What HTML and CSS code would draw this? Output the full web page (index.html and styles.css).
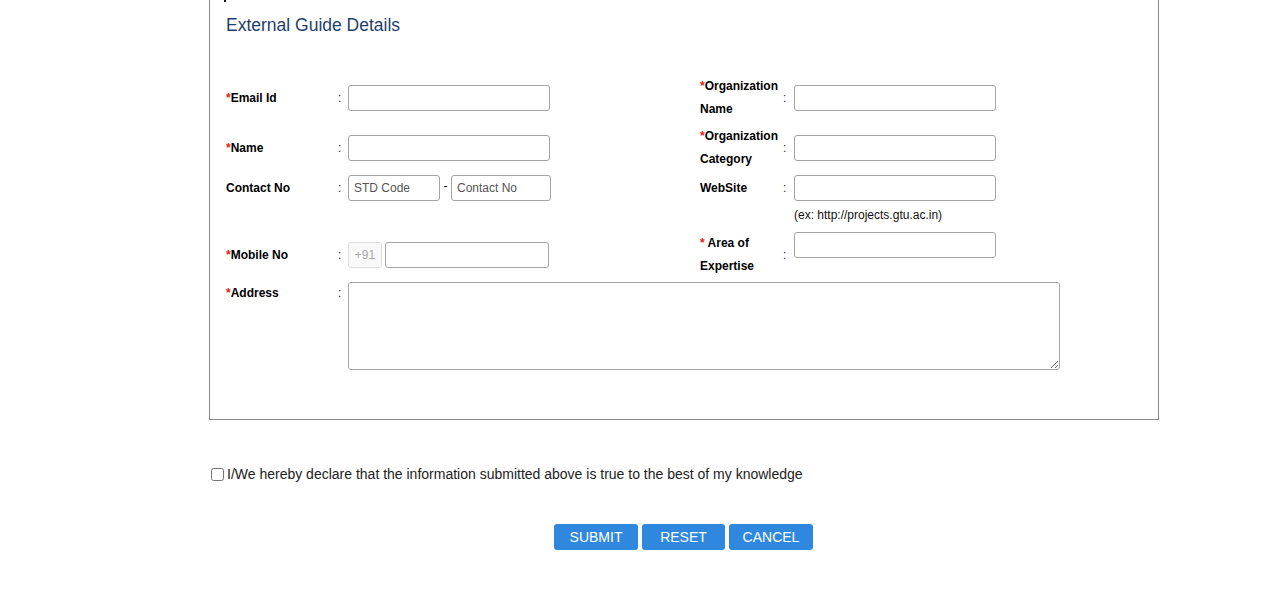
FILE: index.html
```html
<!DOCTYPE html>
<html>
<head>
<meta charset="utf-8">
<link rel="stylesheet" href="styles.css">
</head>
<body>
<div class="page">
  <div class="panel">
    <div class="mark"></div>
    <h2 class="title">External Guide Details</h2>
    <div class="grid">
      <!-- row 1 -->
      <div class="lbl"><span class="req">*</span>Email Id</div>
      <div class="colon">:</div>
      <div class="cell"><input class="inp w202" type="text"></div>
      <div class="lbl two"><span class="req">*</span>Organization Name</div>
      <div class="colon">:</div>
      <div class="cell"><input class="inp w202" type="text"></div>
      <!-- row 2 -->
      <div class="lbl"><span class="req">*</span>Name</div>
      <div class="colon">:</div>
      <div class="cell"><input class="inp w202" type="text"></div>
      <div class="lbl two"><span class="req">*</span>Organization Category</div>
      <div class="colon">:</div>
      <div class="cell"><input class="inp w202" type="text"></div>
      <!-- row 3 -->
      <div class="lbl">Contact No</div>
      <div class="colon">:</div>
      <div class="cell pair"><input class="inp w92" type="text" placeholder="STD Code"><span class="dash">-</span><input class="inp w100" type="text" placeholder="Contact No"></div>
      <div class="lbl">WebSite</div>
      <div class="colon">:</div>
      <div class="cell"><input class="inp w202" type="text"></div>
      <!-- hint row -->
      <div class="hint">(ex: http://projects.gtu.ac.in)</div>
      <!-- row 4 -->
      <div class="lbl"><span class="req">*</span>Mobile No</div>
      <div class="colon">:</div>
      <div class="cell pair"><span class="prefix">+91</span><input class="inp w164" type="text"></div>
      <div class="lbl two"><span class="req">*</span> Area of Expertise</div>
      <div class="colon">:</div>
      <div class="cell top"><input class="inp w202" type="text"></div>
      <!-- row 5 -->
      <div class="lbl top addr"><span class="req">*</span>Address</div>
      <div class="colon top addr">:</div>
      <div class="cell wide"><textarea class="area"></textarea></div>
    </div>
  </div>
  <label class="declare"><input type="checkbox" class="chk">I/We hereby declare that the information submitted above is true to the best of my knowledge</label>
  <div class="actions">
    <button class="btn b84" type="button">SUBMIT</button>
    <button class="btn b83" type="button">RESET</button>
    <button class="btn b84" type="button">CANCEL</button>
  </div>
</div>
</body>
</html>
```
FILE: styles.css
```css
html, body {
  margin: 0;
  padding: 0;
  background: #ffffff;
}
body {
  font-family: "Liberation Sans", Arial, sans-serif;
  color: #000;
}
.page {
  margin-left: 209px;
  width: 950px;
}
.panel {
  border: 1px solid #8a8a8a;
  border-top: none;
  padding: 0 0 49px 16px;
}
.mark {
  width: 2px;
  height: 2px;
  margin-left: -2px;
  background: #111;
}
.title {
  margin: 12px 0 38px 0;
  font-size: 17.5px;
  line-height: 22px;
  font-weight: normal;
  color: #1e3f6c;
}
.grid {
  display: grid;
  grid-template-columns: 112px 10px 352px 83px 11px 1fr;
  grid-template-rows: 48px 52px 28px 26px 54px 88px;
  align-items: center;
}
.lbl {
  font-size: 12px;
  font-weight: bold;
  line-height: 20px;
}
.lbl.two {
  line-height: 23px;
}
.req {
  color: #e21b1b;
}
.colon {
  font-size: 12px;
  line-height: 20px;
  color: #222;
}
.top {
  align-self: start;
}
.addr {
  margin-top: 1px;
}
.cell.top {
  margin-top: 4px;
}
.cell {
  display: flex;
  align-items: center;
}
.inp {
  box-sizing: border-box;
  height: 26px;
  border: 1px solid #a6a6a6;
  border-radius: 3px;
  padding: 0 5px;
  font-family: "Liberation Sans", Arial, sans-serif;
  font-size: 12px;
  color: #333;
  background: #fff;
  margin: 0;
}
.inp::placeholder {
  color: #555;
}
.w202 { width: 202px; }
.w92 { width: 92px; }
.w100 { width: 100px; }
.w164 { width: 164px; }
.dash {
  font-size: 12px;
  width: 11px;
  text-align: center;
  margin-top: -4px;
}
.prefix {
  box-sizing: border-box;
  width: 34px;
  height: 26px;
  border: 1px solid #dedede;
  border-radius: 3px;
  background: #f9f9f9;
  color: #a8a8a8;
  font-size: 12px;
  display: flex;
  align-items: center;
  justify-content: center;
  margin-right: 3px;
}
.hint {
  grid-column: 6;
  font-size: 12px;
  line-height: 20px;
  color: #111;
}
.wide {
  grid-column: 3 / 7;
  align-self: start;
}
.area {
  box-sizing: border-box;
  width: 712px;
  height: 88px;
  border: 1px solid #a6a6a6;
  border-radius: 3px;
  margin: 0;
  display: block;
  resize: both;
}
.declare {
  display: flex;
  align-items: center;
  height: 20px;
  margin-top: 44px;
  font-size: 14px;
  color: #222;
}
.chk {
  width: 13px;
  height: 13px;
  margin: 0 3px 0 2px;
}
.actions {
  display: flex;
  justify-content: center;
  gap: 4px;
  margin-top: 40px;
  padding-right: 1px;
}
.btn {
  height: 26px;
  border: none;
  border-radius: 3px;
  background: #3087de;
  color: #fff;
  font-family: "Liberation Sans", Arial, sans-serif;
  font-size: 14px;
  padding: 0;
}
.b84 { width: 84px; }
.b83 { width: 83px; }
```
